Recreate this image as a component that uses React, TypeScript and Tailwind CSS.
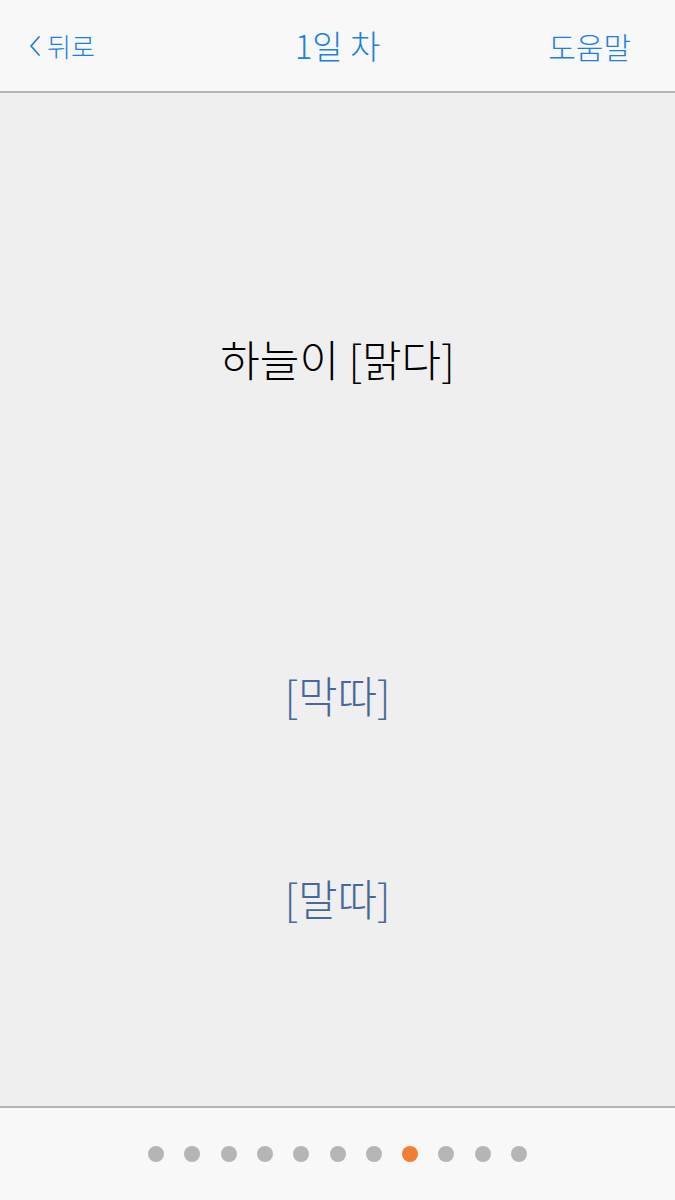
import React from "react";

export default function App() {
  const dots = Array.from({ length: 11 }, (_, i) => i);
  return (
    <div
      className="w-[675px] h-[1200px] flex flex-col bg-[#efefef]"
      style={{ fontFamily: '"Noto Sans CJK KR", "Noto Sans", sans-serif' }}
    >
      <header className="h-[93px] shrink-0 bg-[#f8f8f8] border-b-2 border-[#b4b4b4] flex items-center justify-between pl-[28px] pr-[44px] relative">
        <div className="flex items-center gap-[5px] text-[#1b80e2] text-[26px] font-light">
          <svg width="14" height="22" viewBox="0 0 14 22" fill="none">
            <path d="M11 2 L3 11 L11 20" stroke="#1b80e2" strokeWidth="1.8" strokeLinecap="round" strokeLinejoin="round" />
          </svg>
          <span className="leading-none">뒤로</span>
        </div>
        <div className="absolute left-0 right-0 text-center text-[#1b80e2] text-[33px] font-light leading-none pointer-events-none">
          1일 차
        </div>
        <div className="text-[#1b80e2] text-[30px] font-light leading-none">도움말</div>
      </header>
      <main className="flex-1 flex flex-col items-center">
        <div className="mt-[244px] text-[43px] font-light leading-none text-black">하늘이 [맑다]</div>
        <div className="mt-[293px] text-[43px] font-light leading-none text-[#47689a]">[막따]</div>
        <div className="mt-[160px] text-[43px] font-light leading-none text-[#47689a]">[말따]</div>
      </main>
      <footer className="h-[94px] shrink-0 bg-[#f8f8f8] border-t-2 border-[#b4b4b4] flex items-center justify-center gap-[20.3px]">
        {dots.map((i) => (
          <div
            key={i}
            className={i === 7 ? "w-[16px] h-[16px] rounded-full bg-[#f07f33]" : "w-[16px] h-[16px] rounded-full bg-[#b5b5b5]"}
          />
        ))}
      </footer>
    </div>
  );
}
